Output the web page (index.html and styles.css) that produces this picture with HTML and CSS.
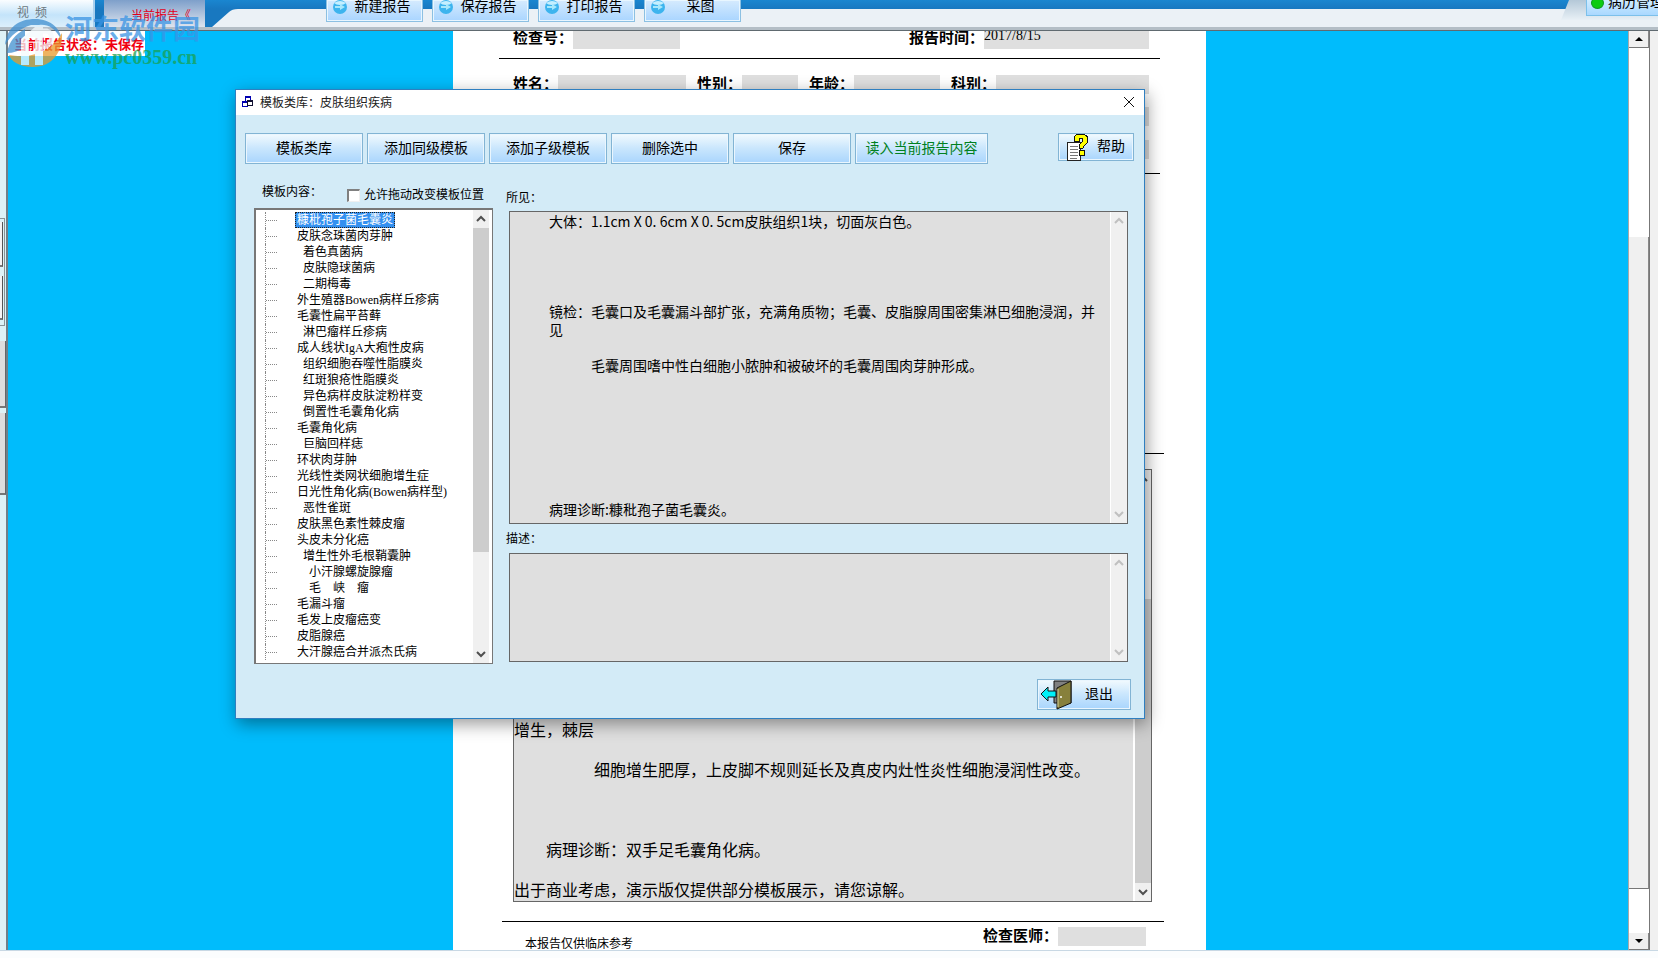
FILE: index.html
```html
<!DOCTYPE html>
<html lang="zh-CN">
<head>
    <meta charset="UTF-8">
    <meta name="viewport" content="width=device-width, initial-scale=1.0">
    <title>模板类库</title>
    <link rel="stylesheet" href="styles.css">
</head>
<body>
    <!-- Top toolbar -->
    <header class="topbar">
        <nav class="tabs">
            <a href="#video" class="tab tab-video">视&nbsp; 频</a>
            <a href="#report" class="tab tab-report">当前报告《</a>
        </nav>
        <div class="ribbon">
            <svg class="slope" viewBox="0 0 30 18"><path d="M0 18 L17 3 Q20 0 26 0 H30 V18 Z" fill="#ebf1f6"/></svg>
            <div class="ribbon-bar"></div>
        </div>
        <div class="top-actions">
            <button class="top-btn"><svg class="orb" viewBox="0 0 14 14"><circle cx="7" cy="7" r="7" fill="#3db4ee"/><path d="M1 3 Q7 -1 13 3 Q11 5 7 5 Q3 5 1 3Z" fill="#c4efff"/><path d="M2 6 H7 V4 L12 7 L7 10 V8 H2Z" fill="#a8e8fc"/></svg><span class="top-label">新建报告</span></button>
            <button class="top-btn"><svg class="orb" viewBox="0 0 14 14"><circle cx="7" cy="7" r="7" fill="#3db4ee"/><path d="M1 3 Q7 -1 13 3 Q11 5 7 5 Q3 5 1 3Z" fill="#c4efff"/><path d="M2 6 H7 V4 L12 7 L7 10 V8 H2Z" fill="#a8e8fc"/></svg><span class="top-label">保存报告</span></button>
            <button class="top-btn"><svg class="orb" viewBox="0 0 14 14"><circle cx="7" cy="7" r="7" fill="#3db4ee"/><path d="M1 3 Q7 -1 13 3 Q11 5 7 5 Q3 5 1 3Z" fill="#c4efff"/><path d="M2 6 H7 V4 L12 7 L7 10 V8 H2Z" fill="#a8e8fc"/></svg><span class="top-label">打印报告</span></button>
            <button class="top-btn"><svg class="orb" viewBox="0 0 14 14"><circle cx="7" cy="7" r="7" fill="#3db4ee"/><path d="M1 3 Q7 -1 13 3 Q11 5 7 5 Q3 5 1 3Z" fill="#c4efff"/><path d="M2 6 H7 V4 L12 7 L7 10 V8 H2Z" fill="#a8e8fc"/></svg><span class="top-label">采图</span></button>
        </div>
        <div class="top-right">
            <button class="manage-btn"><span class="dot"></span>病历管理</button>
        </div>
    </header>

    <main class="main">
        <div class="rail">
            <div class="rail-group">
                <div class="rail-box"></div>
                <div class="rail-box"></div>
            </div>
            <div class="rail-btn"></div>
            <div class="rail-btn rail-btn-tall"></div>
        </div>

        <div class="workspace">
            <div class="sheet">
                <div class="row row-first">
                    <div class="pair"><label for="checkNo">检查号：</label><input id="checkNo" class="field w-no"></div>
                    <div class="pair"><label for="reportTime">报告时间：</label><input id="reportTime" class="field w-time" value="2017/8/15"></div>
                </div>
                <hr class="line">
                <div class="row row-patient">
                    <div class="pair"><label for="name">姓名：</label><input id="name" class="field w-name"></div>
                    <div class="pair"><label for="sex">性别：</label><input id="sex" class="field w-sex"></div>
                    <div class="pair"><label for="age">年龄：</label><input id="age" class="field w-age"></div>
                    <div class="pair"><label for="dept">科别：</label><input id="dept" class="field w-dept"></div>
                </div>
                <div class="row row-plain"><input class="field wide" aria-label="送检医院"></div>
                <div class="row row-plain"><input class="field wide" aria-label="临床诊断"></div>
                <hr class="line">
                <hr class="line line-mid">
                <div class="report-box">
                    <textarea class="report-text" aria-label="报告内容" spellcheck="false">增生，棘层

　　　　　细胞增生肥厚，上皮脚不规则延长及真皮内灶性炎性细胞浸润性改变。



　　病理诊断：双手足毛囊角化病。

出于商业考虑，演示版仅提供部分模板展示，请您谅解。</textarea>
                    <div class="vbar">
                        <svg class="chev" viewBox="0 0 16 18"><path d="M4 11 L8 7 L12 11"/></svg>
                        <div class="vtrack"></div>
                        <div class="vthumb vthumb-report"></div>
                        <svg class="chev" viewBox="0 0 16 18"><path d="M4 7 L8 11 L12 7"/></svg>
                    </div>
                </div>
                <hr class="line line-bottom">
                <div class="sheet-foot">
                    <span class="note">本报告仅供临床参考</span>
                    <div class="pair"><label for="doctor">检查医师：</label><input id="doctor" class="field w-doctor"></div>
                </div>
            </div>
        </div>

        <div class="page-scroll">
            <button class="scroll-btn" aria-label="向上"><svg viewBox="0 0 8 4"><path d="M0 4 L4 0 L8 4Z"/></svg></button>
            <div class="scroll-gap"></div>
            <div class="scroll-thumb"></div>
            <div class="scroll-gap scroll-gap-end"></div>
            <button class="scroll-btn" aria-label="向下"><svg viewBox="0 0 8 4"><path d="M0 0 L4 4 L8 0Z"/></svg></button>
        </div>
        <div class="gutter"></div>
    </main>
    <footer class="bottom-edge"></footer>

    <!-- Report state and site mark -->
    <div class="state">当前报告状态：未保存</div>
    <div class="mark">
        <svg class="mark-logo" viewBox="0 0 60 54">
            <path d="M0 30 C2 12 14 4 30 4 C46 4 56 14 57 26 C50 12 42 9 34 10 L26 10 C14 14 6 20 0 30Z" fill="#3f8fd0"/>
            <path d="M2 38 C4 26 10 20 20 14 L20 32 C14 36 8 38 2 38Z" fill="#3f8fd0"/>
            <path d="M57 18 C58 36 48 52 28 52 C14 52 6 46 4 40 C24 44 46 38 57 18Z" fill="#e99a2c"/>
            <path d="M16 24 L30 12 L38 12 V50 H30 V22 L24 22 V50 H16Z" fill="#f4fafd"/>
            <path d="M36 16 H42 Q48 18 46 26 Q44 32 36 32" fill="none" stroke="#f4fafd" stroke-width="5"/>
        </svg>
        <div class="mark-text">
            <span class="mark-name">河东软件园</span>
            <span class="mark-url">www.pc0359.cn</span>
        </div>
    </div>

    <!-- Template library dialog -->
    <section class="dialog" role="dialog" aria-labelledby="dialogTitle">
        <div class="titlebar">
            <svg class="title-icon" viewBox="0 0 12 12" shape-rendering="crispEdges">
                <path d="M3 0 H9 V6 H3Z M4 2 V5 H8 V2Z" fill="#0000b0" fill-rule="evenodd"/>
                <path d="M0 5 H6 V11 H0Z M1 7 V10 H5 V7Z" fill="#0000b0" fill-rule="evenodd"/>
                <path d="M5 4 H11 V10 H5Z" fill="#101030"/>
                <path d="M6 6 H10 V9 H6Z" fill="#fff"/>
            </svg>
            <h1 id="dialogTitle">模板类库：皮肤组织疾病</h1>
            <button class="close" aria-label="关闭"><svg viewBox="0 0 10 10"><path d="M0 0 L10 10 M10 0 L0 10"/></svg></button>
        </div>

        <div class="dialog-tools">
            <button class="btn">模板类库</button>
            <button class="btn">添加同级模板</button>
            <button class="btn">添加子级模板</button>
            <button class="btn">删除选中</button>
            <button class="btn">保存</button>
            <button class="btn btn-read">读入当前报告内容</button>
            <button class="btn btn-help">
                <svg class="help-icon" viewBox="0 0 22 27" shape-rendering="crispEdges">
                    <path d="M0 8 H13 V26 H0Z" fill="#fff" stroke="#222"/>
                    <path d="M3 12 H11 M3 15 H11 M3 18 H11 M3 21 H11 M3 24 H10" stroke="#777"/>
                    <path d="M7 4 Q8 0 14 0 Q21 0 21 6 Q21 9 17 12 L16 14 H12 V11 Q16 8 16 6 Q16 4 14 4 Q12 4 12 7 H7Z" fill="#ffff00" stroke="#111"/>
                    <rect x="12" y="16" width="5" height="5" fill="#ffff00" stroke="#111"/>
                </svg>
                帮助
            </button>
        </div>

        <div class="dialog-body">
            <div class="left-col">
                <div class="tree-head">
                    <span class="tree-title">模板内容：</span>
                    <input type="checkbox" id="allowDrag" class="check">
                    <label for="allowDrag">允许拖动改变模板位置</label>
                </div>
                <div class="tree-box">
                    <ul class="tree">
                        <li><span class="selected">糠秕孢子菌毛囊炎</span></li>
                        <li>皮肤念珠菌肉芽肿</li>
                        <li class="in1">着色真菌病</li>
                        <li class="in1">皮肤隐球菌病</li>
                        <li class="in1">二期梅毒</li>
                        <li>外生殖器Bowen病样丘疹病</li>
                        <li>毛囊性扁平苔藓</li>
                        <li class="in1">淋巴瘤样丘疹病</li>
                        <li>成人线状IgA大疱性皮病</li>
                        <li class="in1">组织细胞吞噬性脂膜炎</li>
                        <li class="in1">红斑狼疮性脂膜炎</li>
                        <li class="in1">异色病样皮肤淀粉样变</li>
                        <li class="in1">倒置性毛囊角化病</li>
                        <li>毛囊角化病</li>
                        <li class="in1">巨脑回样痣</li>
                        <li>环状肉芽肿</li>
                        <li>光线性类网状细胞增生症</li>
                        <li>日光性角化病(Bowen病样型)</li>
                        <li class="in1">恶性雀斑</li>
                        <li>皮肤黑色素性棘皮瘤</li>
                        <li>头皮未分化癌</li>
                        <li class="in1">增生性外毛根鞘囊肿</li>
                        <li class="in2">小汗腺螺旋腺瘤</li>
                        <li class="in2">毛　峡　瘤</li>
                        <li>毛漏斗瘤</li>
                        <li>毛发上皮瘤癌变</li>
                        <li>皮脂腺癌</li>
                        <li>大汗腺癌合并派杰氏病</li>
                    </ul>
                    <div class="vbar">
                        <svg class="chev" viewBox="0 0 16 18"><path d="M4 11 L8 7 L12 11"/></svg>
                        <div class="vthumb vthumb-tree"></div>
                        <div class="vtrack"></div>
                        <svg class="chev" viewBox="0 0 16 18"><path d="M4 7 L8 11 L12 7"/></svg>
                    </div>
                </div>
            </div>

            <div class="right-col">
                <label class="box-label" for="findings">所见：</label>
                <div class="text-box text-box-main">
                    <textarea id="findings" spellcheck="false">大体：1.1cm X 0. 6cm X 0. 5cm皮肤组织1块，切面灰白色。




镜检：毛囊口及毛囊漏斗部扩张，充满角质物；毛囊、皮脂腺周围密集淋巴细胞浸润，并
见

　　　毛囊周围嗜中性白细胞小脓肿和被破坏的毛囊周围肉芽肿形成。







病理诊断:糠秕孢子菌毛囊炎。</textarea>
                    <div class="vbar vbar-off">
                        <svg class="chev" viewBox="0 0 16 18"><path d="M4 11 L8 7 L12 11"/></svg>
                        <div class="vtrack"></div>
                        <svg class="chev" viewBox="0 0 16 18"><path d="M4 7 L8 11 L12 7"/></svg>
                    </div>
                </div>
                <label class="box-label box-label-desc" for="desc">描述：</label>
                <div class="text-box text-box-desc">
                    <textarea id="desc"></textarea>
                    <div class="vbar vbar-off">
                        <svg class="chev" viewBox="0 0 16 18"><path d="M4 11 L8 7 L12 11"/></svg>
                        <div class="vtrack"></div>
                        <svg class="chev" viewBox="0 0 16 18"><path d="M4 7 L8 11 L12 7"/></svg>
                    </div>
                </div>
            </div>
        </div>

        <div class="dialog-foot">
            <button class="btn btn-exit">
                <svg class="exit-icon" viewBox="0 0 32 30">
                    <path d="M14 1 H31 V23 H14Z" fill="#808080" stroke="#111"/>
                    <path d="M17 8 L31 1 V23 L17 29Z" fill="#87803c" stroke="#111"/>
                    <path d="M18 9 V27" stroke="#d8d4a0"/>
                    <path d="M1 14 L8 7 V11 H16 V17 H8 V21Z" fill="#00f0f8" stroke="#111"/>
                    <circle cx="21" cy="17" r="1" fill="#fff"/>
                </svg>
                退出
            </button>
        </div>
    </section>
</body>
</html>
```
FILE: styles.css
```css
/* General Styles */
* {
    margin: 0;
    padding: 0;
    box-sizing: border-box;
}

body {
    display: flex;
    flex-direction: column;
    min-height: 100vh;
    position: relative;
    overflow-x: hidden;
    font-family: "Liberation Serif", "Noto Sans CJK SC", serif;
    font-size: 12px;
    color: #000;
    background-color: #fbfdfe;
}

button,
input,
textarea {
    font-family: inherit;
    color: inherit;
    border: none;
    border-radius: 0;
    outline: none;
}

button {
    cursor: pointer;
}

a {
    color: inherit;
    text-decoration: none;
}

/* Top toolbar */
.topbar {
    position: relative;
    display: flex;
    height: 31px;
    overflow: hidden;
    background: linear-gradient(#1a86d0, #1878c0 9px);
    border-bottom: 1px solid #606a70;
    box-shadow: inset 0 -3px #b4bec6;
}

.tabs {
    display: flex;
    gap: 9px;
    width: 205px;
    height: 27px;
}

.tab {
    height: 27px;
    line-height: 27px;
}

.tab-video {
    width: 95px;
    padding-left: 17px;
    color: #6b7880;
    background: linear-gradient(#fafdff, #c4e4fa 15px, #dceffb);
    border-right: 2px solid #a8d0ee;
}

.tab-report {
    width: 101px;
    padding-left: 27px;
    line-height: 32px;
    color: #e0001c;
    background: linear-gradient(#7e9fca, #dde4ee);
}

.ribbon {
    display: flex;
    flex: 1;
    padding: 9px 0 3px 7px;
}

.slope {
    width: 30px;
    height: 18px;
}

.ribbon-bar {
    flex: 1;
    background-color: #ebf1f6;
}

.top-actions {
    position: absolute;
    left: 326px;
    top: 0;
    display: flex;
    gap: 9px;
}

.top-btn {
    display: flex;
    align-items: center;
    width: 97px;
    height: 22px;
    padding: 0 6px 8px 6px;
    font-size: 14px;
    line-height: 14px;
    background: linear-gradient(#d6ebfe, #a9d5ff);
    border: 1px solid #8cc0e2;
    border-top: none;
    box-shadow: inset 0 0 0 1px #e8f6ff;
}

.top-label {
    flex: 1;
    text-align: center;
    padding-left: 2px;
}

.orb {
    flex: none;
    width: 14px;
    height: 14px;
}

.top-right {
    position: absolute;
    right: 0;
    top: 0;
    width: 97px;
    height: 20px;
    padding-left: 25px;
    overflow: hidden;
    background: linear-gradient(#b4c8d8, #e8f0f6);
    clip-path: polygon(8px 0, 100% 0, 100% 100%, 0 100%);
}

.manage-btn {
    display: flex;
    align-items: center;
    gap: 4px;
    width: 97px;
    height: 16px;
    padding: 0 0 9px 4px;
    font-size: 14px;
    line-height: 14px;
    white-space: nowrap;
    background: linear-gradient(#d0ecff, #a9d8ff);
    border: 1px solid #7cc0ea;
    border-top: none;
}

.dot {
    flex: none;
    width: 13px;
    height: 12px;
    border-radius: 50%;
    background-color: #0ccc10;
    border: 1px solid #109a20;
}

/* Main area */
.main {
    display: flex;
    flex: 1;
}

.rail {
    width: 8px;
    padding-top: 187px;
    background-color: #ddf2f6;
    border-right: 2px solid #6f8088;
}

.rail-group {
    display: flex;
    flex-direction: column;
    gap: 9px;
    width: 5px;
    height: 108px;
    padding: 3px 1px 5px 0;
    margin-bottom: 15px;
    border: 1px solid #8a9498;
    border-left: none;
}

.rail-box {
    flex: 1;
    background-color: #f4f4f4;
    border-right: 1px solid #555;
    border-bottom: 2px solid #777;
}

.rail-btn {
    height: 67px;
    margin-bottom: 5px;
    background-color: #dedede;
    border-right: 1px solid #666;
    border-bottom: 2px solid #777;
}

.rail-btn-tall {
    height: 82px;
}

.workspace {
    flex: 1;
    display: flex;
    justify-content: center;
    padding-left: 23px;
    background-color: #00bcfc;
}

/* Report sheet */
.sheet {
    display: flex;
    flex-direction: column;
    width: 753px;
    padding: 0 42px 0 46px;
    background-color: #fff;
}

.row {
    display: flex;
    justify-content: space-between;
    padding: 0 15px 0 14px;
}

.row-first {
    height: 27px;
}

.row-patient {
    padding-top: 16px;
    margin-bottom: 13px;
}

.row-plain {
    margin-bottom: 14px;
}

.pair {
    display: flex;
    align-items: flex-start;
}

.pair label {
    font-size: 15px;
    line-height: 18px;
    font-weight: bold;
    white-space: nowrap;
}

.row-first label {
    line-height: 14px;
}

.field {
    height: 19px;
    background-color: #dfdfdf;
    font-size: 14px;
}

.row-first .field {
    height: 18px;
    padding-bottom: 9px;
}

.w-no { width: 107px; }
.w-time { width: 165px; }
.w-name { width: 128px; }
.w-sex { width: 56px; }
.w-age { width: 86px; }
.w-dept { width: 153px; }
.w-doctor { width: 88px; }

.wide {
    flex: 1;
}

.line {
    height: 1px;
    flex: none;
    border: none;
    background-color: #000;
    margin-right: 4px;
}

.line-mid {
    margin: 279px 0 15px 3px;
}

.report-box {
    display: flex;
    flex: 1;
    min-height: 433px;
    margin: 0 12px 0 14px;
    background-color: #dfdfdf;
    border: 1px solid #666;
}

.report-text {
    flex: 1;
    padding: 251px 0 0 0;
    font-size: 16px;
    line-height: 20px;
    background-color: transparent;
    border-right: 2px solid #fff;
    resize: none;
    overflow: hidden;
}

.line-bottom {
    margin: 19px 0 5px 3px;
}

.sheet-foot {
    display: flex;
    justify-content: space-between;
    height: 23px;
    padding: 0 18px 0 26px;
}

.note {
    padding-top: 8px;
    line-height: 18px;
}

/* Thin scrollbars of the text areas */
.vbar {
    display: flex;
    flex-direction: column;
    width: 16px;
    background-color: #f0f0f0;
}

.chev {
    width: 16px;
    height: 18px;
    flex: none;
    fill: none;
    stroke: #505050;
    stroke-width: 2;
}

.vbar-off .chev {
    stroke: #c0c0c0;
}

.vtrack {
    flex: 1;
}

.vthumb {
    background-color: #cdcdcd;
}

.vthumb-report {
    flex: 0 0 66%;
}

.vthumb-tree {
    flex: 0 0 324px;
}

/* Page scrollbar */
.page-scroll {
    display: flex;
    flex-direction: column;
    width: 22px;
    background-color: #fff;
    border-left: 1px solid #a8a8a8;
    border-right: 1px solid #777;
}

.scroll-btn {
    display: flex;
    align-items: center;
    justify-content: center;
    height: 17px;
    background-color: #f0f0f0;
    border-right: 1px solid #888;
    border-bottom: 1px solid #777;
}

.scroll-btn svg {
    width: 8px;
    height: 4px;
}

.scroll-gap {
    flex: 189;
}

.scroll-thumb {
    flex: 652;
    background-color: #f0f0f0;
    border-right: 1px solid #888;
    border-bottom: 1px solid #777;
}

.scroll-gap-end {
    flex: 44;
}

.gutter {
    width: 8px;
    background-color: #f0f0f0;
}

.bottom-edge {
    height: 8px;
    background-color: #fbfdfe;
    border-top: 1px solid #c8d8e4;
}

/* Report state and site mark */
.state {
    position: absolute;
    left: 8px;
    top: 31px;
    padding: 3px 1px 0 6px;
    font-size: 13px;
    line-height: 22px;
    font-weight: bold;
    color: #f00010;
    background-color: #fff;
}

.mark {
    position: absolute;
    left: 5px;
    top: 15px;
    display: flex;
    opacity: 0.75;
}

.mark-logo {
    width: 60px;
    height: 54px;
}

.mark-text {
    display: flex;
    flex-direction: column;
    font-weight: bold;
}

.mark-name {
    font-size: 27px;
    line-height: 30px;
    color: #3a94e4;
}

.mark-url {
    font-size: 20px;
    line-height: 24px;
    color: #1aa050;
}

/* Template dialog */
.dialog {
    position: absolute;
    left: 235px;
    right: 513px;
    top: 89px;
    background-color: #d3ebf7;
    border: 1px solid #2f7fc0;
    box-shadow: 2px 5px 16px rgba(0, 0, 0, 0.4);
}

.titlebar {
    display: flex;
    align-items: center;
    height: 25px;
    padding: 0 10px 2px 6px;
    background-color: #fff;
}

.title-icon {
    width: 12px;
    height: 12px;
    margin-right: 6px;
}

.titlebar h1 {
    flex: 1;
    font-size: 12px;
    font-weight: normal;
    color: #222;
}

.close {
    width: 10px;
    height: 10px;
    display: flex;
    background: none;
}

.close svg {
    width: 10px;
    height: 10px;
    overflow: visible;
    fill: none;
    stroke: #111;
}

.dialog-tools {
    display: flex;
    align-items: flex-start;
    gap: 4px;
    padding: 18px 10px 0 9px;
}

.btn {
    width: 118px;
    height: 31px;
    font-size: 14px;
    line-height: 20px;
    white-space: nowrap;
    background: linear-gradient(#f2fafe, #c9e6fd 50%, #a9d5fd);
    border: 1px solid #82b4d4;
    box-shadow: inset 0 0 0 1px #eaf6fe;
}

.btn-read {
    width: 133px;
    color: #008020;
}

.btn-help {
    display: flex;
    align-items: center;
    justify-content: space-between;
    width: 76px;
    height: 28px;
    padding: 0 8px 0 8px;
    margin-left: auto;
}

.help-icon {
    width: 22px;
    height: 27px;
    overflow: visible;
}

.dialog-body {
    display: flex;
    gap: 13px;
    padding: 16px 16px 0 18px;
}

.left-col {
    display: flex;
    flex-direction: column;
    width: 239px;
}

.tree-head {
    display: flex;
    align-items: center;
    height: 28px;
    padding: 2px 0 0 8px;
    line-height: 16px;
}

.tree-title {
    width: 85px;
    padding-bottom: 6px;
}

.check {
    appearance: none;
    width: 13px;
    height: 13px;
    margin-right: 4px;
    background-color: #fff;
    border: 1px solid #f0f0f0;
    border-top: 2px solid #808080;
    border-left: 2px solid #808080;
}

.tree-box {
    display: flex;
    flex: 1;
    padding-right: 3px;
    background-color: #fff;
    border: 2px solid #777;
    border-right-width: 1px;
    border-bottom-width: 1px;
}

.tree {
    flex: 1;
    list-style: none;
    padding: 2px 0 1px 9px;
    overflow: hidden;
}

.tree li {
    height: 16px;
    padding-left: 31px;
    line-height: 16px;
    white-space: nowrap;
    border-left: 1px dotted #888;
}

.tree li::before {
    content: "";
    float: left;
    width: 11px;
    height: 8px;
    margin-left: -31px;
    border-bottom: 1px dotted #888;
}

.tree .in1 {
    padding-left: 37px;
}

.tree .in1::before {
    margin-left: -37px;
}

.tree .in2 {
    padding-left: 43px;
}

.tree .in2::before {
    margin-left: -43px;
}

.selected {
    display: inline-block;
    height: 16px;
    padding: 0 1px;
    margin-left: -2px;
    line-height: 14px;
    color: #fff;
    background-color: #3390f0;
    border: 1px dotted #222;
}

.right-col {
    display: flex;
    flex-direction: column;
    flex: 1;
}

.box-label {
    line-height: 16px;
    padding: 10px 0 5px;
}

.box-label-desc {
    padding: 7px 0 6px;
}

.text-box {
    display: flex;
    margin-left: 3px;
    background-color: #dfdfdf;
    border: 1px solid #666;
}

.text-box textarea {
    flex: 1;
    min-width: 0;
    padding: 0 0 0 39px;
    font-family: "Noto Sans CJK SC", sans-serif;
    font-size: 14px;
    line-height: 18px;
    white-space: pre;
    background-color: transparent;
    border-right: 1px solid #fff;
    resize: none;
    overflow: hidden;
}

.text-box-main {
    height: 313px;
}

.text-box-desc {
    height: 109px;
    margin-bottom: 2px;
}

.dialog-foot {
    display: flex;
    justify-content: flex-end;
    padding: 15px 13px 8px;
}

.btn-exit {
    display: flex;
    align-items: center;
    gap: 13px;
    width: 94px;
    padding: 0 0 0 2px;
}

.exit-icon {
    width: 32px;
    height: 30px;
}
```
